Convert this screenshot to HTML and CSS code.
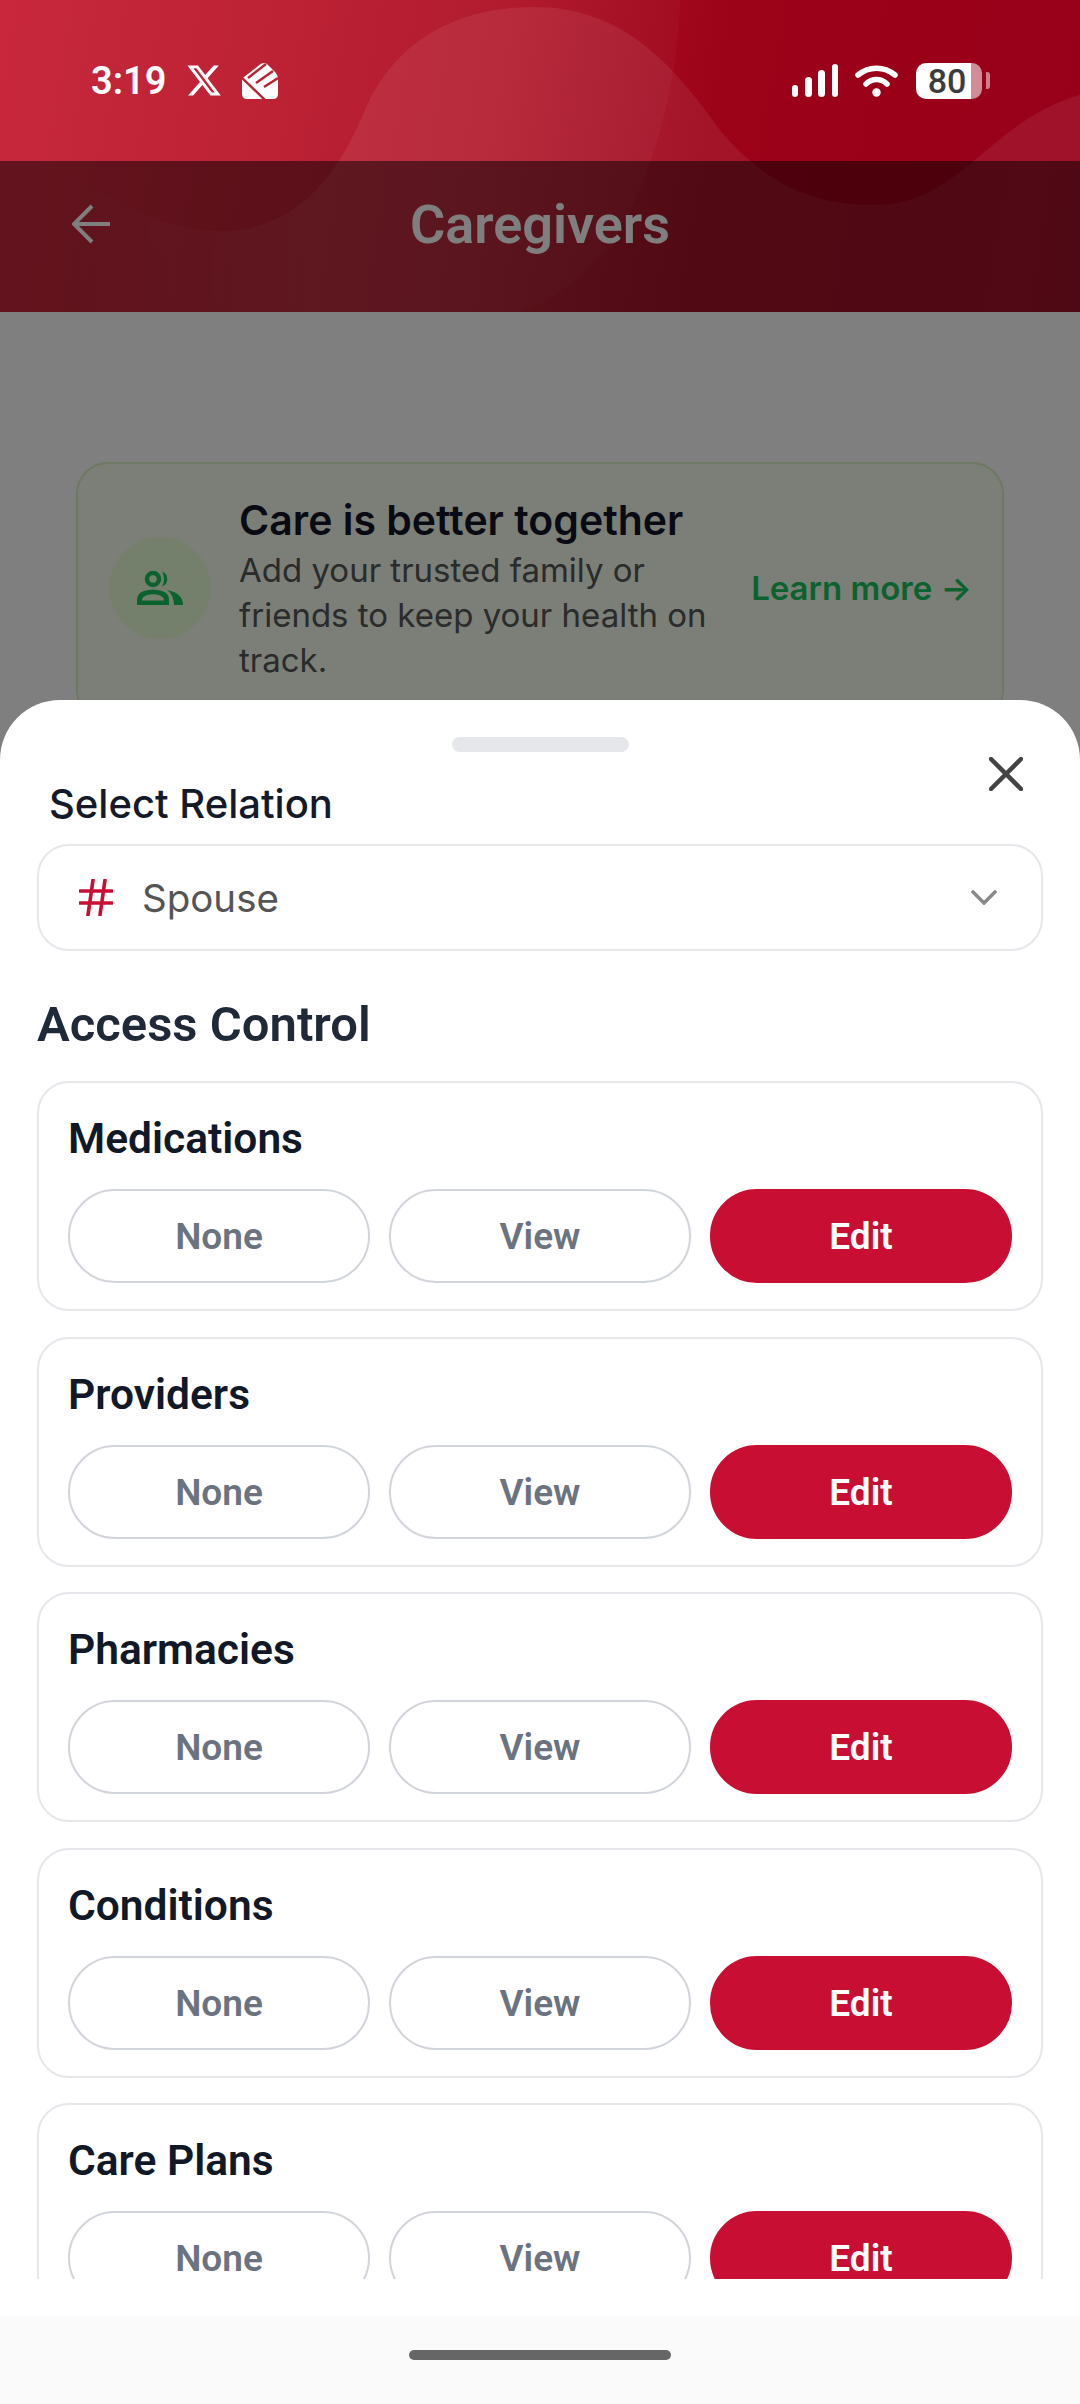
FILE: index.html
```html
<!DOCTYPE html>
<html lang="en">
<head>
	<meta charset="UTF-8">
	<title>Caregivers</title>
	<link rel="stylesheet" href="styles.css">
</head>
<body>
	<div class="page">
		<div class="top">
			<svg class="waves" viewBox="0 0 1080 312" preserveAspectRatio="none">
				<defs>
					<linearGradient id="fade" gradientUnits="userSpaceOnUse" x1="50" y1="0" x2="320" y2="0">
						<stop offset="0" stop-color="#fff" stop-opacity="0"/>
						<stop offset="1" stop-color="#fff" stop-opacity=".07"/>
					</linearGradient>
				</defs>
				<path d="M0 0H680C680 50 665 130 640 190C610 260 560 300 517 312H0Z" fill="#fff" opacity=".03"/>
				<path d="M0 110C60 170 140 231 220 231C300 231 340 170 365 110C400 30 470 7 534 7C620 7 670 60 720 130C770 190 820 205 876 205C960 205 990 120 1080 95V312H0Z" fill="url(#fade)"/>
			</svg>

			<div class="status">
				<div class="status-left">
					<span class="time">3:19</span>
					<svg class="x-logo" viewBox="1 2 22 20"><path d="M18.244 2.25h3.308l-7.227 8.26 8.502 11.24H16.17l-5.214-6.817L4.99 21.75H1.68l7.73-8.835L1.254 2.25H8.08l4.713 6.231zm-1.161 17.52h1.833L7.084 4.126H5.117z" fill="#fff"/></svg>
					<svg class="app-logo" viewBox="0 0 36 36">
						<path d="M2 14L18 1.500Q22 -1 25 1L33 9Q36 12 36 15V31Q36 36 31 36H5Q0 36 0 31V17Q0 15 2 14Z" fill="#fff"/>
						<path d="M-1 14L23 37M6 15L24 1M14 20L31 8M22 24L36 15" stroke="#bb2030" stroke-width="2.400" fill="none"/>
					</svg>
				</div>
				<div class="status-right">
					<svg class="signal" viewBox="0 0 46 33">
						<rect x="0" y="21" width="6" height="12" rx="3" fill="#fff"/>
						<rect x="13" y="13" width="7" height="20" rx="3.500" fill="#fff"/>
						<rect x="26" y="6" width="7" height="27" rx="3.500" fill="#fff"/>
						<rect x="40" y="0" width="6" height="33" rx="3" fill="#fff"/>
					</svg>
					<svg class="wifi" viewBox="0 0 43 33">
						<path d="M3 11C14 2 29 2 40 11" stroke="#fff" stroke-width="5.500" stroke-linecap="round" fill="none"/>
						<path d="M11 20C17 14 26 14 32 20" stroke="#fff" stroke-width="5.500" stroke-linecap="round" fill="none"/>
						<circle cx="21.500" cy="28.500" r="4.200" fill="#fff"/>
					</svg>
					<div class="battery">
						<div class="battery-body"><span class="battery-level">80</span></div>
						<div class="battery-tip"></div>
					</div>
				</div>
			</div>

			<div class="appbar">
				<svg class="back" viewBox="0 0 40 40"><path d="M38 20H3M20 2L2 20L20 38" stroke="#fff" stroke-width="4" fill="none"/></svg>
				<h1>Caregivers</h1>
			</div>
		</div>

		<div class="content">
			<div class="banner">
				<div class="banner-icon">
					<svg viewBox="0 0 46 34">
						<circle cx="16" cy="8" r="6" stroke="#18c45c" stroke-width="4.500" fill="none"/>
						<path d="M25 .5A8 8 0 0 1 25 15.500Q29 8 25 .5Z" fill="#18c45c"/>
						<path fill-rule="evenodd" d="M0 34V29Q0 22 7 20Q16 17 25 20Q32 22 32 29V34ZM5 29.500H27Q27 26 23 24.500Q16 22 9 24.500Q5 26 5 29.500Z" fill="#18c45c"/>
						<path d="M30 19Q46 22 46 34H37Q37 24 30 19Z" fill="#18c45c"/>
					</svg>
				</div>
				<div class="banner-text">
					<h2>Care is better together</h2>
					<p>Add your trusted family or friends to keep your health on track.</p>
				</div>
				<span class="learn">Learn more →</span>
			</div>
		</div>

		<div class="navbar"><div class="home-pill"></div></div>

		<div class="scrim"></div>

		<div class="sheet">
			<div class="handle"></div>
			<svg class="close" viewBox="0 0 34 34"><path d="M2 2L32 32M32 2L2 32" stroke="#444" stroke-width="4.500" stroke-linecap="round"/></svg>
			<div class="sheet-body">
				<div class="field-label">Select Relation</div>
				<div class="select">
					<svg class="hash" viewBox="0 0 34 37"><path d="M14 1L9 36M26 1L21 36M1 12H33M1 24H33" stroke="#c80f33" stroke-width="3.600" stroke-linecap="round"/></svg>
					<span class="select-value">Spouse</span>
					<svg class="chevron" viewBox="0 0 26 15"><path d="M2 2L13 13L24 2" stroke="#8a8a8a" stroke-width="3.600" stroke-linecap="round" fill="none"/></svg>
				</div>
				<h3>Access Control</h3>
				<div class="cards">
					<div class="card">
						<div class="card-title">Medications</div>
						<div class="choices"><span class="choice">None</span><span class="choice">View</span><span class="choice active">Edit</span></div>
					</div>
					<div class="card">
						<div class="card-title">Providers</div>
						<div class="choices"><span class="choice">None</span><span class="choice">View</span><span class="choice active">Edit</span></div>
					</div>
					<div class="card">
						<div class="card-title">Pharmacies</div>
						<div class="choices"><span class="choice">None</span><span class="choice">View</span><span class="choice active">Edit</span></div>
					</div>
					<div class="card">
						<div class="card-title">Conditions</div>
						<div class="choices"><span class="choice">None</span><span class="choice">View</span><span class="choice active">Edit</span></div>
					</div>
					<div class="card">
						<div class="card-title">Care Plans</div>
						<div class="choices"><span class="choice">None</span><span class="choice">View</span><span class="choice active">Edit</span></div>
					</div>
				</div>
			</div>
		</div>
	</div>
</body>
</html>
```

FILE: styles.css
```css
* {
	margin: 0;
	padding: 0;
	box-sizing: border-box;
}

body {
	width: 1080px;
	height: 2404px;
	overflow: hidden;
	font-family: Roboto, sans-serif;
	background-color: #fff;
}

.page {
	position: relative;
	display: flex;
	flex-direction: column;
	width: 1080px;
	height: 2404px;
	overflow: hidden;
}

/* red header */
.top {
	position: relative;
	height: 312px;
	background: linear-gradient(100deg, #c82236 0%, #b01428 45%, #9c0218 65%, #98001a 100%);
}

.waves {
	position: absolute;
	top: 0;
	left: 0;
	width: 1080px;
	height: 312px;
}

.status {
	position: relative;
	display: flex;
	justify-content: space-between;
	align-items: center;
	height: 161px;
	padding: 0 90px 0 91px;
}

.status-left,
.status-right {
	display: flex;
	align-items: center;
}

.time {
	font-size: 38px;
	font-weight: 600;
	line-height: 44px;
	color: #fff;
}

.x-logo {
	width: 34px;
	height: 33px;
	margin-left: 21px;
}

.app-logo {
	width: 36px;
	height: 36px;
	margin-left: 21px;
}

.signal {
	width: 46px;
	height: 33px;
}

.wifi {
	width: 43px;
	height: 33px;
	margin-left: 17px;
}

.battery {
	display: flex;
	align-items: center;
	margin-left: 18px;
}

.battery-body {
	width: 66px;
	height: 36px;
	border-radius: 10px;
	background: linear-gradient(90deg, #fff 84%, rgba(255,255,255,.55) 84%);
	text-align: center;
}

.battery-level {
	display: block;
	width: 56px;
	margin-left: 3px;
	font-size: 34px;
	font-weight: 500;
	line-height: 36px;
	color: #3c3c3c;
}

.battery-tip {
	width: 4px;
	height: 17px;
	margin-left: 4px;
	border-radius: 0 3px 3px 0;
	background-color: rgba(255,255,255,.5);
}

.appbar {
	position: relative;
	display: flex;
	align-items: center;
	justify-content: center;
	height: 151px;
	padding-bottom: 25px;
}

.appbar h1 {
	font-size: 54px;
	font-weight: 600;
	color: #fff;
}

.back {
	position: absolute;
	left: 72px;
	top: 43px;
	width: 40px;
	height: 40px;
}

/* page under the sheet */
.content {
	flex: 1;
	padding: 150px 76px 0;
}

.banner {
	display: flex;
	align-items: center;
	height: 260px;
	padding: 0 30px 9px 31px;
	border: 2px solid #dcf2c8;
	border-radius: 32px;
	background-color: #f6fff0;
}

.banner-icon {
	display: flex;
	align-items: center;
	justify-content: center;
	flex: none;
	width: 102px;
	height: 102px;
	border-radius: 50%;
	background-color: #e9ffd8;
}

.banner-icon svg {
	width: 46px;
	height: 34px;
}

.banner-text {
	width: 500px;
	margin-left: 28px;
	font-family: Inter, sans-serif;
}

.banner-text h2 {
	font-size: 41px;
	font-weight: 600;
	line-height: 55px;
	color: #141428;
}

.banner-text p {
	font-size: 33px;
	line-height: 45px;
	color: #545654;
}

.learn {
	margin-left: 14px;
	font-family: Inter, sans-serif;
	font-size: 33px;
	font-weight: 600;
	white-space: nowrap;
	color: #18c45c;
}

.navbar {
	position: relative;
	z-index: 3;
	display: flex;
	align-items: center;
	justify-content: center;
	height: 88px;
	padding-bottom: 10px;
	background-color: #fafafa;
}

.home-pill {
	width: 262px;
	height: 10px;
	border-radius: 5px;
	background-color: #666;
}

.scrim {
	position: absolute;
	top: 161px;
	left: 0;
	right: 0;
	bottom: 88px;
	z-index: 1;
	background-color: rgba(0,0,0,.5);
}

/* bottom sheet */
.sheet {
	position: absolute;
	top: 700px;
	left: 0;
	right: 0;
	bottom: 88px;
	z-index: 2;
	display: flex;
	flex-direction: column;
	padding-bottom: 37px;
	border-radius: 60px 60px 0 0;
	background-color: #fff;
}

.handle {
	flex: none;
	width: 177px;
	height: 15px;
	margin: 37px auto 0;
	border-radius: 8px;
	background-color: #e5e7eb;
}

.close {
	position: absolute;
	top: 57px;
	right: 57px;
	width: 34px;
	height: 34px;
}

.sheet-body {
	flex: 1;
	padding: 0 37px;
	overflow: hidden;
}

.field-label {
	margin: 30px 0 18px 12px;
	font-family: Inter, sans-serif;
	font-size: 40px;
	font-weight: 500;
	line-height: 44px;
	color: #141a2a;
}

.select {
	display: flex;
	align-items: center;
	height: 107px;
	padding: 0 44px 0 40px;
	border: 2px solid #e5e7eb;
	border-radius: 32px;
}

.hash {
	width: 34px;
	height: 37px;
}

.select-value {
	flex: 1;
	margin-left: 29px;
	font-family: Inter, sans-serif;
	font-size: 38.500px;
	color: #555;
}

.chevron {
	width: 26px;
	height: 15px;
}

h3 {
	margin: 44px 0 26px;
	font-size: 49px;
	font-weight: 600;
	line-height: 60px;
	color: #1f2937;
}

.cards {
	display: flex;
	flex-direction: column;
	gap: 25.500px;
}

.card {
	flex: none;
	height: 230px;
	padding: 31px 29px 0;
	border: 2px solid #e5e7eb;
	border-radius: 32px;
}

.card-title {
	font-size: 42.500px;
	font-weight: 600;
	line-height: 50px;
	color: #111827;
}

.choices {
	display: grid;
	grid-template-columns: repeat(3, 1fr);
	gap: 19px;
	margin-top: 25px;
}

.choice {
	display: flex;
	align-items: center;
	justify-content: center;
	height: 94px;
	padding-top: 2px;
	border: 2px solid #d1d5db;
	border-radius: 47px;
	font-size: 37px;
	font-weight: 600;
	line-height: 36px;
	color: #6b7280;
}

.choice.active {
	border-color: #c80f33;
	background-color: #c80f33;
	color: #fff;
}
```
